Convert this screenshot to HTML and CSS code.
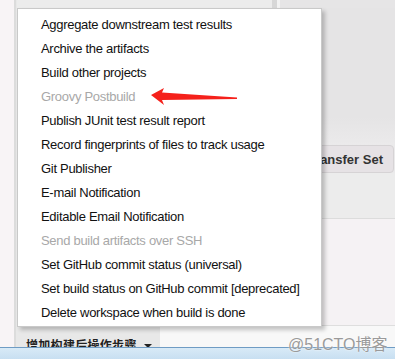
FILE: index.html
```html
<!DOCTYPE html>
<html lang="zh">
<head>
    <meta charset="UTF-8">
    <meta name="viewport" content="width=device-width, initial-scale=1.0">
    <title>Post-build actions</title>
    <link rel="stylesheet" href="styles.css">
</head>
<body>

    <div class="screen">
        <div class="gutter"></div>
        <div class="rail"></div>

        <div class="content">
            <div class="topbar">
                <div class="topbar-left"></div>
                <div class="topbar-split"></div>
                <div class="topbar-gap"></div>
                <div class="topbar-right"></div>
            </div>
            <div class="section section-upper"></div>
            <div class="section section-button">
                <button class="transfer-btn">Add Transfer Set</button>
            </div>
            <div class="section section-lower"></div>
            <div class="section section-pale"></div>
            <div class="section section-footer">
                <button class="add-step">增加构建后操作步骤<span class="caret"></span></button>
            </div>
        </div>
    </div>

    <div class="taskbar"></div>

    <!-- dropdown menu van de post-build stappen -->
    <ul class="menu">
        <li>Aggregate downstream test results</li>
        <li>Archive the artifacts</li>
        <li>Build other projects</li>
        <li class="disabled">Groovy Postbuild</li>
        <li>Publish JUnit test result report</li>
        <li>Record fingerprints of files to track usage</li>
        <li>Git Publisher</li>
        <li>E-mail Notification</li>
        <li>Editable Email Notification</li>
        <li class="disabled">Send build artifacts over SSH</li>
        <li>Set GitHub commit status (universal)</li>
        <li>Set build status on GitHub commit [deprecated]</li>
        <li>Delete workspace when build is done</li>
    </ul>

    <svg class="arrow" width="92" height="24" viewBox="0 0 92 24">
        <polygon points="3,11 16,4 14,8.5 89,13.5 89,15 14,16 16,21" fill="#f5211b"/>
    </svg>

    <div class="watermark">@51CTO博客</div>

</body>
</html>
```

FILE: styles.css
```css
body {
    margin: 0;
    padding: 0;
    width: 395px;
    height: 359px;
    overflow: hidden;
    position: relative;
    font-family: 'Liberation Sans', Arial, sans-serif;
    background: #f8f4f6;
}

.screen {
    display: flex;
    height: 347px;
}

.gutter {
    width: 14px;
    background: #f8f4f6;
}

.rail {
    width: 3px;
    background: #dcdcdc;
    border-right: 1px solid #e8e8e8;
    box-sizing: border-box;
}

.content {
    flex: 1;
    display: flex;
    flex-direction: column;
}

.topbar {
    height: 8px;
    display: flex;
}

.topbar-left {
    width: 255px;
    background: #ececec;
}

.topbar-split {
    width: 5px;
    background: #d7d7d7;
}

.topbar-gap {
    width: 3px;
    background: #f2f2f2;
}

.topbar-right {
    flex: 1;
    background: #e6e5e6;
}

.section-upper {
    height: 137px;
    background: linear-gradient(#e5e4e5, #e5e4e5 80%, #ebeaeb);
}

.section-button {
    height: 28px;
    display: flex;
    justify-content: flex-end;
    background: #ebeaeb;
}

.transfer-btn {
    width: 200px;
    margin-right: 1px;
    border: 1px solid #d6d3d5;
    border-radius: 4px;
    background: #e6e2e5;
    color: #333;
    font-family: 'Liberation Sans', Arial, sans-serif;
    font-weight: bold;
    font-size: 13px;
    text-align: right;
    padding: 0 10px 0 0;
}

.section-lower {
    height: 45px;
    background: #ececec;
    border-bottom: 1px solid #dcdcdc;
}

.section-pale {
    height: 106px;
    background: #f5f2f4;
    border-bottom: 1px solid #dedede;
}

.section-footer {
    flex: 1;
    background: #f8f8f8;
    overflow: hidden;
}

.add-step {
    width: 143px;
    height: 30px;
    border: none;
    background: #e8e8e8;
    text-align: left;
    white-space: nowrap;
    padding: 6px 0 0 9px;
    margin: 0;
    font-family: 'Noto Sans CJK SC', sans-serif;
    font-size: 12px;
    letter-spacing: 0.3px;
    font-weight: bold;
    color: #222;
    display: block;
}

.caret {
    display: inline-block;
    vertical-align: middle;
    margin-left: 7px;
    border-left: 4px solid transparent;
    border-right: 4px solid transparent;
    border-top: 4px solid #222;
}

.taskbar {
    height: 12px;
    border-top: 1px solid #6f9cc4;
    background: linear-gradient(#d8eaf7, #c6def1);
}

.menu {
    position: absolute;
    left: 17px;
    top: 8px;
    width: 305px;
    height: 319px;
    box-sizing: border-box;
    margin: 0;
    padding: 4px 0 0 0;
    list-style: none;
    background: #fff;
    border: 1px solid #c9c9c9;
    box-shadow: 3px 3px 4px rgba(0, 0, 0, 0.22);
}

.menu li {
    height: 24px;
    line-height: 24px;
    padding-left: 23px;
    font-size: 13px;
    letter-spacing: -0.3px;
    color: #111;
    white-space: nowrap;
}

.menu li.disabled {
    color: #a8a8a8;
}

.arrow {
    position: absolute;
    left: 148px;
    top: 84px;
}

.watermark {
    position: absolute;
    left: 288px;
    top: 331px;
    font-family: 'Liberation Sans', 'Noto Sans CJK SC', sans-serif;
    font-size: 16px;
    color: #9a9a9a;
    text-shadow: 0 0 2px #fff;
}
```
